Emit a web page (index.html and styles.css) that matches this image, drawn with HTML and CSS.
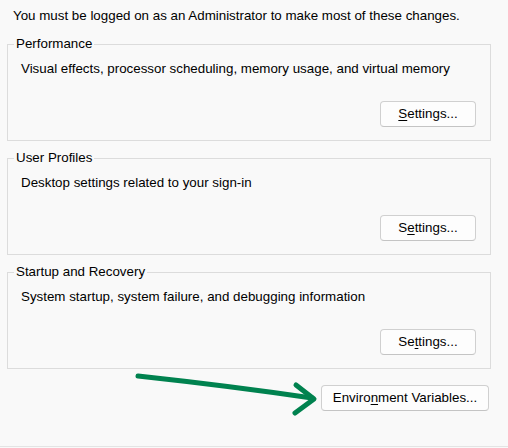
FILE: index.html
```html
<!DOCTYPE html>
<html>
<head>
<meta charset="utf-8">
<link rel="stylesheet" href="styles.css">
</head>
<body>
<div class="page">
  <p class="note">You must be logged on as an Administrator to make most of these changes.</p>

  <fieldset class="group">
    <legend>Performance</legend>
    <p class="desc">Visual effects, processor scheduling, memory usage, and virtual memory</p>
    <div class="actions"><button class="btn settings"><u>S</u>ettings...</button></div>
  </fieldset>

  <fieldset class="group">
    <legend>User Profiles</legend>
    <p class="desc">Desktop settings related to your sign-in</p>
    <div class="actions"><button class="btn settings">S<u>e</u>ttings...</button></div>
  </fieldset>

  <fieldset class="group">
    <legend>Startup and Recovery</legend>
    <p class="desc">System startup, system failure, and debugging information</p>
    <div class="actions"><button class="btn settings">Se<u>t</u>tings...</button></div>
  </fieldset>

  <div class="bottom-actions">
    <button class="btn env">Enviro<u>n</u>ment Variables...</button>
  </div>

  <svg class="arrow" width="508" height="448" viewBox="0 0 508 448">
    <path d="M138 376 Q230 386 312 398" fill="none" stroke="#00824f" stroke-width="5" stroke-linecap="round"/>
    <path d="M296 385 L314 399 L295 413" fill="none" stroke="#00824f" stroke-width="5" stroke-linecap="round" stroke-linejoin="round"/>
  </svg>
</div>
</body>
</html>
```

FILE: styles.css
```css
* { box-sizing: border-box; }

html, body {
  margin: 0;
  padding: 0;
  background: #f9f9f9;
}

body {
  width: 508px;
  height: 448px;
  overflow: hidden;
  font-family: "Liberation Sans", Arial, sans-serif;
  font-size: 13.35px;
  line-height: 16px;
  color: #000;
}

.page {
  position: relative;
  height: 447px;
  border-bottom: 1px solid #e4e4e4;
  padding: 8px 17px 0 7px;
  display: flex;
  flex-direction: column;
}

.note {
  margin: 0 0 12px 6px;
}

.group {
  margin: 0 0 9px 0;
  padding: 9px 14px 13px 6px;
  border: 1px solid #dcdcdc;
  min-width: 0;
}

.group legend {
  padding: 0 2px;
}

.desc {
  margin: 0 0 24px 7px;
}

.actions {
  display: flex;
  justify-content: flex-end;
}

.btn {
  font-family: inherit;
  font-size: 13.35px;
  line-height: 16px;
  color: #000;
  background: #fdfdfd;
  border: 1px solid #d0d0d0;
  border-bottom-color: #c4c4c4;
  border-radius: 4px;
  padding: 4px 0;
  height: 26px;
  text-align: center;
}

.btn u {
  text-decoration-thickness: 1px;
  text-underline-offset: 2px;
}

.settings { width: 96px; }

.bottom-actions {
  display: flex;
  justify-content: flex-end;
  margin-top: 7px;
  margin-right: 2px;
}

.env { width: 168px; }

.arrow {
  position: absolute;
  left: 0;
  top: 0;
  pointer-events: none;
}
```
